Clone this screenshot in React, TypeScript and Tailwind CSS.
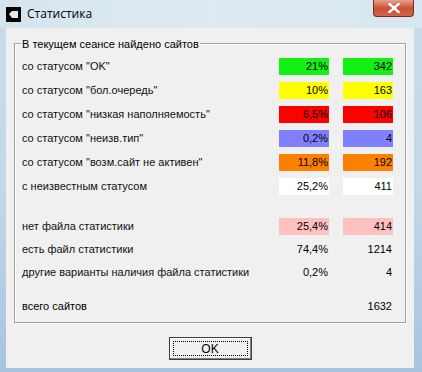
import React from 'react'

interface Row {
  label: string
  pct: string
  count: string
  bg?: string
}

const STATUS_ROWS: Row[] = [
  { label: 'со статусом "OK"', pct: '21%', count: '342', bg: 'bg-[#14ef14]' },
  { label: 'со статусом "бол.очередь"', pct: '10%', count: '163', bg: 'bg-[#ffff00]' },
  { label: 'со статусом "низкая наполняемость"', pct: '6,5%', count: '106', bg: 'bg-[#ff0000]' },
  { label: 'со статусом "неизв.тип"', pct: '0,2%', count: '4', bg: 'bg-[#8080ff]' },
  { label: 'со статусом "возм.сайт не активен"', pct: '11,8%', count: '192', bg: 'bg-[#ff8000]' },
  { label: 'с неизвестным статусом', pct: '25,2%', count: '411', bg: 'bg-white' },
]

const FILE_ROWS: Row[] = [
  { label: 'нет файла статистики', pct: '25,4%', count: '414', bg: 'bg-[#ffc0c0]' },
  { label: 'есть файл статистики', pct: '74,4%', count: '1214' },
  { label: 'другие варианты наличия файла статистики', pct: '0,2%', count: '4' },
]

function StatRow({ row, h }: { row: Row; h: string }) {
  return (
    <div className={`flex items-center ${h}`}>
      <span className="flex-1 text-[#111]">{row.label}</span>
      <span className={`w-[50px] h-[17px] leading-[17px] text-right pr-[1px] ${row.bg ?? ''}`}>{row.pct}</span>
      <span className={`ml-[14px] w-[50px] h-[17px] leading-[17px] text-right pr-[1px] ${row.bg ?? ''}`}>{row.count}</span>
    </div>
  )
}

export default function App() {
  return (
    <div className="w-[422px] h-[372px] overflow-hidden flex flex-col bg-gradient-to-b from-[#c9dcea] via-[#c3d8e8] to-[#a9c3df] text-[11px] text-black"
      style={{ fontFamily: '"Liberation Sans", Arial, sans-serif' }}>
      {/* title bar */}
      <div className="relative h-[28px] shrink-0 flex items-center pl-[6px] bg-gradient-to-r from-[#d4e4ef] via-[#dfeaf2] to-[#d7e6f0]">
        <div className="w-[15px] h-[15px] bg-black flex items-center justify-center">
          <svg width="11" height="9" viewBox="0 0 11 9">
            <path d="M1 4 L4 1 H10 V8 H4 Z" fill="#e8e8e8" />
          </svg>
        </div>
        <span className="ml-[6px] text-[12px] text-black" style={{ fontFamily: '"Open Sans", "Noto Sans", sans-serif' }}>Статистика</span>
        <div className="absolute right-[8px] top-0 w-[41px] h-[17px] rounded-b-[4px] border border-t-0 border-[#7a2a1c] bg-gradient-to-b from-[#e8a08c] via-[#c8513a] to-[#d06548] flex items-center justify-center">
          <svg width="12" height="10" viewBox="0 0 12 10">
            <path d="M1.5 1 L10.5 9 M10.5 1 L1.5 9" stroke="white" strokeWidth="2.4" strokeLinecap="square" />
          </svg>
        </div>
      </div>

      {/* client area */}
      <div className="ml-[6px] mr-[8px] h-[340px] bg-[#f0f0f0] flex flex-col">
        <div className="relative mt-[15px] ml-[8px] w-[392px] h-[280px] border border-[#a0a0a0] shadow-[inset_1px_1px_0_#fff,1px_1px_0_#fff] pt-[10px] pl-[7px] pr-[12px]">
          <span className="absolute -top-[8px] left-[6px] px-[1px] bg-[#f0f0f0]">В текущем сеансе найдено сайтов</span>
          {STATUS_ROWS.map(r => <StatRow key={r.label} row={r} h="h-[24px]" />)}
          <div className="h-[17px]" />
          {FILE_ROWS.map(r => <StatRow key={r.label} row={r} h="h-[23px]" />)}
          <div className="flex items-center h-[24px] mt-[10px]">
            <span className="flex-1">всего сайтов</span>
            <span className="w-[50px] text-right pr-[1px]">1632</span>
          </div>
        </div>

        <div className="flex justify-center mt-[14px]">
          <button className="w-[83px] h-[23px] bg-[#f0f0f0] border border-[#404040] shadow-[inset_-1px_-1px_0_#808080,inset_1px_1px_0_#fff] p-[3px]">
            <div className="w-full h-full border border-dotted border-black flex items-center justify-center text-[12px]">OK</div>
          </button>
        </div>
      </div>
    </div>
  )
}
